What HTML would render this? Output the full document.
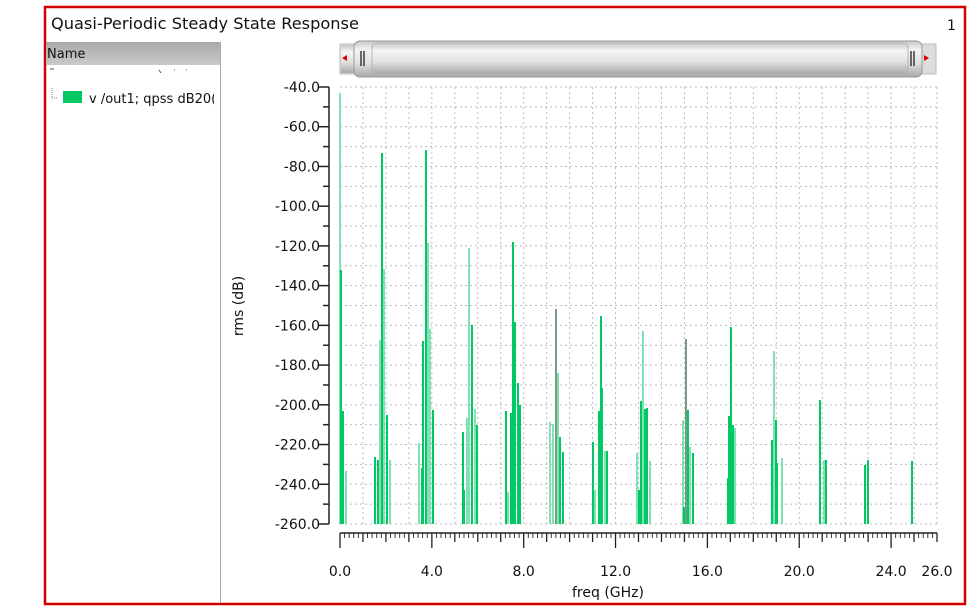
<!DOCTYPE html>
<html><head><meta charset="utf-8"><style>
body{margin:0;width:969px;height:612px;background:#fff;overflow:hidden;font-family:"DejaVu Sans","Liberation Sans",sans-serif;}
</style></head><body>
<svg width="969" height="612" xmlns="http://www.w3.org/2000/svg" style="position:absolute;left:0;top:0">
<defs>
<linearGradient id="hd" x1="0" y1="0" x2="0" y2="1"><stop offset="0" stop-color="#a9a9a9"/><stop offset="1" stop-color="#c9c9c9"/></linearGradient>
<linearGradient id="sb" x1="0" y1="0" x2="0" y2="1"><stop offset="0" stop-color="#c8c8c8"/><stop offset="0.25" stop-color="#f4f4f4"/><stop offset="0.6" stop-color="#e2e2e2"/><stop offset="1" stop-color="#a8a8a8"/></linearGradient>
</defs>
<rect x="45" y="7" width="920" height="597" fill="#fff" stroke="#d40000" stroke-width="2.5"/>
<text x="51" y="29" font-size="16.2" fill="#111">Quasi-Periodic Steady State Response</text>
<text x="947" y="30" font-size="14" fill="#111">1</text>
<rect x="46" y="42" width="174" height="23" fill="url(#hd)"/>
<text x="47" y="58" font-size="13" fill="#111">Name</text>
<line x1="220.5" y1="42" x2="220.5" y2="603" stroke="#aaa"/>
<path d="M50 69 h4 M159 70 l2 3 M174 70 h1 M186 70 h1" stroke="#555" stroke-width="1"/>
<path d="M52 88 v10 h5" stroke="#888" stroke-dasharray="1 1" fill="none"/>
<rect x="63" y="91" width="19" height="12" fill="#00c864"/>
<text x="89" y="103" font-size="13" fill="#111">v /out1; qpss dB20(</text>
<rect x="214" y="80" width="6" height="30" fill="#fff"/>
<rect x="340" y="44" width="596" height="30" fill="#ddd" stroke="#bbb"/>
<rect x="341" y="45" width="14" height="28" fill="url(#sb)"/>
<path d="M342 58 l5 -3 v6z" fill="#d00"/>
<path d="M929 58 l-5 -3 v6z" fill="#d00"/>
<rect x="354" y="41" width="568" height="36" rx="6" fill="url(#sb)" stroke="#999"/>
<rect x="372" y="43" width="536" height="31" rx="4" fill="url(#sb)" stroke="#b5b5b5"/>
<path d="M361 51 v15 M364 51 v15 M911 51 v15 M914 51 v15" stroke="#222" stroke-width="1.3"/>
<g stroke="#bbb" stroke-dasharray="2 3" stroke-width="1" id="grid"></g>
<g id="bars"></g>
<g id="axes" stroke="#222" stroke-width="1.5" fill="none"></g>
<g id="labels" font-size="14" fill="#111"></g>
<text x="608" y="597" font-size="14" text-anchor="middle" fill="#111">freq (GHz)</text>
<text x="0" y="0" font-size="14" fill="#111" text-anchor="middle" transform="translate(243 306) rotate(-90)">rms (dB)</text>
</svg>
<script>
(function(){
var ns="http://www.w3.org/2000/svg";
function el(p,t,a,txt){var e=document.createElementNS(ns,t);for(var k in a)e.setAttribute(k,a[k]);if(txt)e.textContent=txt;document.getElementById(p).appendChild(e);}
var X0=340,X1=937,YT=87,YB=524,ppg=(X1-X0)/26;
for(var i=0;i<=22;i++){var y=YT+i*(YB-YT)/22;el('grid','line',{x1:X0,x2:X1,y1:y,y2:y});}
for(var g=1;g<=26;g++){var x=X0+g*ppg;el('grid','line',{x1:x,x2:x,y1:YT,y2:YB});}
var B=[[340,93,1],[341,270,0],[343,411,0],[346,471,1],
[375,457,0],[378,460,0],[380,340,1],[382,153,0],[384,269,1],[387,415,0],[390,460,1],
[419,443,1],[422,468,0],[423,341,0],[426,150,0],[428,243,1],[430,329,1],[433,410,0],
[463,432,0],[464,490,0],[467,418,1],[469,248,1],[472,325,0],[475,409,1],[477,425,0],
[506,411,0],[508,492,1],[511,413,0],[513,242,0],[515,322,0],[518,383,0],[520,405,0],
[550,422,1],[553,424,1],[556,309,2],[558,373,1],[560,437,0],[563,452,0],
[593,442,0],[595,490,1],[599,411,0],[601,316,0],[602,388,0],[605,451,1],[607,451,0],
[637,453,1],[639,490,0],[641,401,0],[643,331,1],[645,409,0],[647,408,0],[650,461,1],
[683,420,1],[684,507,0],[686,339,2],[688,410,0],[690,447,1],[693,453,0],
[728,478,0],[729,416,0],[731,327,0],[733,425,0],[735,428,1],
[772,440,0],[774,351,1],[776,420,0],[777,463,0],[782,458,1],
[820,400,0],[824,460,1],[826,460,0],[865,465,0],[868,460,0],[912,461,0]];
var C=['#00c864','#80e2b2','#7a9a88'];
B.forEach(function(b){el('bars','rect',{x:b[0]-1,y:b[1],width:2,height:YB-b[1],fill:C[b[2]]});});
el('axes','line',{x1:329,x2:329,y1:YT,y2:YB});
for(var i=0;i<=22;i++){var y=YT+i*(YB-YT)/22;el('axes','line',{x1:329,x2:(i%2?323:319),y1:y,y2:y});}
for(var i=0;i<=11;i++){var y=YT+i*(YB-YT)/11;el('labels','text',{x:320,y:y+5,'text-anchor':'end'},(-40-20*i).toFixed(1));}
el('axes','line',{x1:X0,x2:X1,y1:533,y2:533});
for(var t=0;t<=130;t++){var x=X0+t*ppg/5;var l=(t%20==0)?548:(t%5==0?542:538);el('axes','line',{x1:x,x2:x,y1:533,y2:l,'stroke-width':(t%5==0?1.3:0.9)});}
[0,4,8,12,16,20,24,26].forEach(function(v){el('labels','text',{x:X0+v*ppg,y:576,'text-anchor':'middle'},v.toFixed(1));});
})();
</script>
</body></html>
